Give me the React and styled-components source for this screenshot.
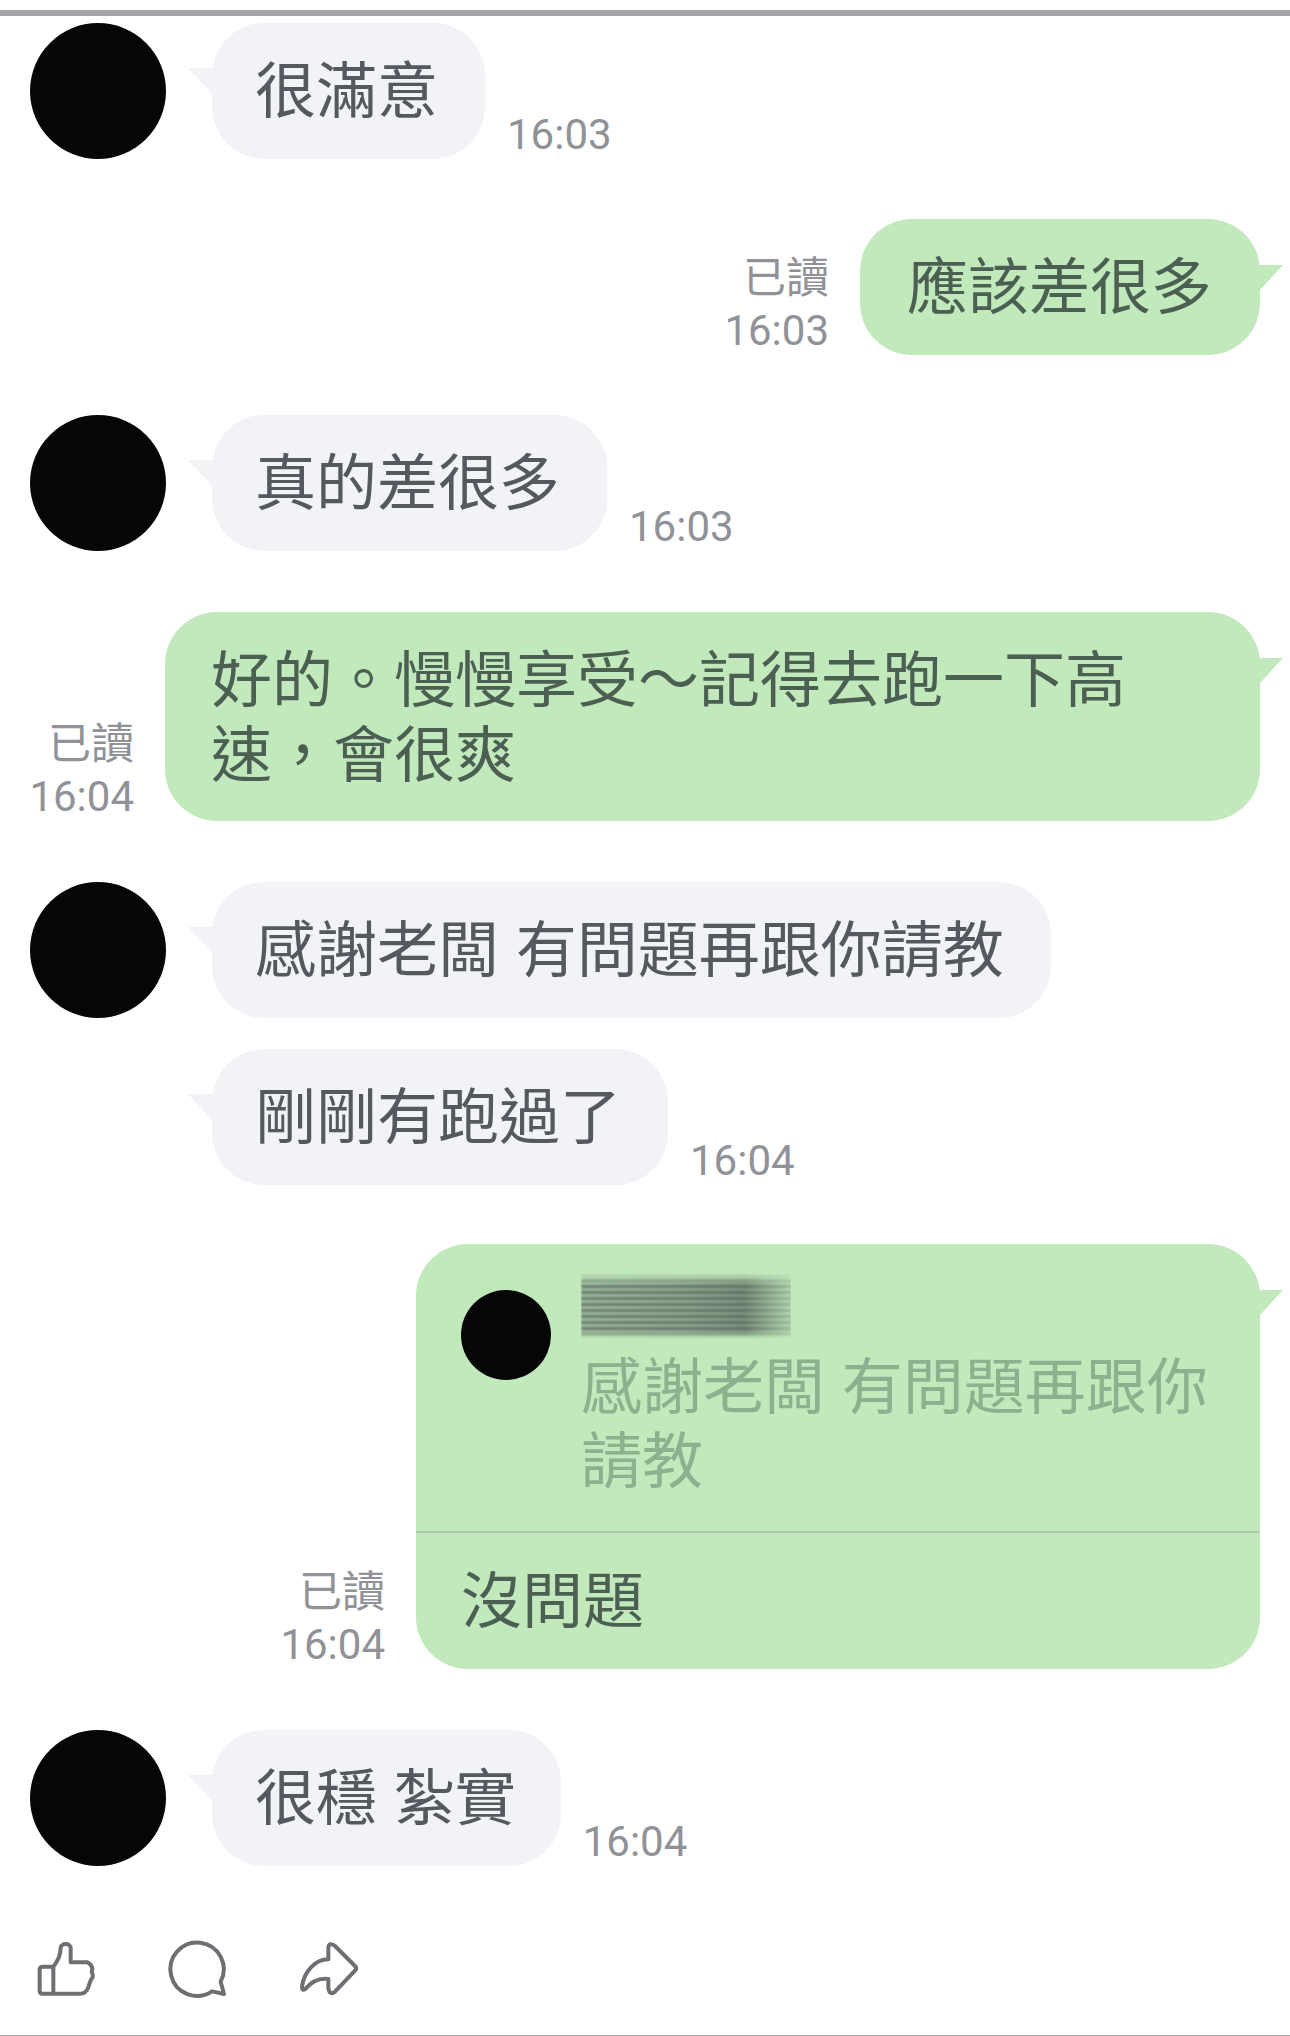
import React from "react";
import styled, { createGlobalStyle } from "styled-components";

const Global = createGlobalStyle`
  html, body { margin: 0; padding: 0; background: #fff; }
  body { font-family: "Noto Sans CJK TC", "Noto Sans", sans-serif; }
`;

const Page = styled.div`
  width: 1290px;
  height: 2036px;
  box-sizing: border-box;
  padding-top: 10px;
  background: #fff;
  border-bottom: 1px solid #a9a9ab;
  overflow: hidden;
`;

const TopBar = styled.div`
  height: 6px;
  background: #a4a5aa;
`;

const Row = styled.div`
  display: flex;
  align-items: flex-start;
  justify-content: ${(p) => (p.$out ? "flex-end" : "flex-start")};
  margin-top: ${(p) => p.$top}px;
  padding: ${(p) => (p.$out ? "0 30px 0 0" : "0 0 0 30px")};
`;

const Avatar = styled.div`
  flex: none;
  width: 136px;
  height: 136px;
  margin-right: 46px;
  border-radius: 50%;
  background: ${(p) => (p.$hidden ? "transparent" : "#060606")};
`;

const bubblePadding = (p) => {
  if (p.$quote) return "0";
  if (p.$width) return "26px 46px 33px";
  if (p.$tight) return "26px 45px 35px 43px";
  return p.$out ? "26px 48px 35px 47px" : "26px 47px 35px 43px";
};

const Bubble = styled.div`
  position: relative;
  flex: none;
  box-sizing: border-box;
  width: ${(p) => (p.$width ? `${p.$width}px` : "auto")};
  padding: ${bubblePadding};
  border-radius: 52px;
  background: ${(p) => (p.$out ? "#c1e9bc" : "#f2f3f6")};
  color: ${(p) => (p.$out ? "#4c5f53" : "#55585f")};
  font-size: 61px;
  line-height: 75px;
  word-spacing: 3px;
  white-space: nowrap;

  &::before {
    content: "";
    position: absolute;
    top: ${(p) => (p.$out ? "46px" : "45px")};
    ${(p) => (p.$out ? "right: -23px;" : "left: -24px;")}
    width: 30px;
    height: 26px;
    background: ${(p) => (p.$out ? "#c1e9bc" : "#f2f3f6")};
    clip-path: ${(p) =>
      p.$out
        ? "polygon(100% 0, 0 0, 20% 100%)"
        : "polygon(0 0, 100% 0, 80% 100%)"};
  }
`;

const Meta = styled.div`
  flex: none;
  align-self: flex-end;
  display: flex;
  flex-direction: column;
  align-items: ${(p) => (p.$out ? "flex-end" : "flex-start")};
  gap: 9px;
  margin: ${(p) => (p.$out ? "0 31px 0 0" : "0 0 0 22px")};
  color: #909297;
  line-height: 48px;
`;

const Read = styled.span`
  font-family: "Noto Sans CJK TC", sans-serif;
  font-size: 43px;
  font-weight: 400;
`;

const Time = styled.span`
  font-family: Roboto, "Liberation Sans", sans-serif;
  font-size: 42px;
  font-weight: 400;
`;

const QuoteTop = styled.div`
  display: flex;
  align-items: flex-start;
  height: 289px;
  box-sizing: border-box;
  padding: 29px 0 0 45px;
  border-bottom: 2px solid #aec9ae;
`;

const QuoteAvatar = styled.div`
  flex: none;
  width: 90px;
  height: 90px;
  margin: 17px 30px 0 0;
  border-radius: 50%;
  background: #060606;
`;

const QuoteBody = styled.div`
  display: flex;
  flex-direction: column;
`;

const BlurName = styled.div`
  width: 210px;
  height: 66px;
  margin-bottom: 7px;
  background:
    linear-gradient(90deg, rgba(84, 100, 88, 0.1) 0, rgba(84, 100, 88, 0.3) 50%, rgba(84, 100, 88, 0.5) 78%, rgba(193, 233, 188, 0.55) 100%),
    repeating-linear-gradient(180deg, #6c8070 0 3px, #a9c6a9 3px 6px);
  filter: blur(1.2px);
  -webkit-mask-image: linear-gradient(180deg, transparent 0, #000 18%, #000 88%, transparent 100%);
  mask-image: linear-gradient(180deg, transparent 0, #000 18%, #000 88%, transparent 100%);
`;

const QuoteText = styled.div`
  color: #8db08f;
  font-size: 61px;
  line-height: 74px;
`;

const Reply = styled.div`
  padding: 26px 45px 35px;
`;

const Footer = styled.div`
  display: flex;
  gap: 73.5px;
  margin-top: 74px;
  padding-left: 37px;
`;

const IconSvg = styled.svg`
  width: 58px;
  height: 58px;
  overflow: visible;
  fill: none;
  stroke: #6e6f73;
  stroke-width: 12;
  stroke-linecap: round;
  stroke-linejoin: round;
`;

const Incoming = ({ top, text, time, hideAvatar, tight }) => (
  <Row $top={top}>
    <Avatar $hidden={hideAvatar} />
    <Bubble $tight={tight}>{text}</Bubble>
    {time && (
      <Meta>
        <Time>{time}</Time>
      </Meta>
    )}
  </Row>
);

const OutMeta = ({ time }) => (
  <Meta $out>
    <Read>已讀</Read>
    <Time>{time}</Time>
  </Meta>
);

export default function App() {
  return (
    <Page>
      <Global />
      <TopBar />
      <Incoming top={7} text="很滿意" time="16:03" />
      <Row $out $top={60}>
        <OutMeta time="16:03" />
        <Bubble $out>應該差很多</Bubble>
      </Row>
      <Incoming top={60} text="真的差很多" time="16:03" />
      <Row $out $top={61}>
        <OutMeta time="16:04" />
        <Bubble $out $width={1095}>
          好的。慢慢享受～記得去跑一下高
          <br />
          速，會很爽
        </Bubble>
      </Row>
      <Incoming top={61} text="感謝老闆 有問題再跟你請教" />
      <Incoming top={31} text="剛剛有跑過了" time="16:04" hideAvatar />
      <Row $out $top={59}>
        <OutMeta time="16:04" />
        <Bubble $out $quote $width={844}>
          <QuoteTop>
            <QuoteAvatar />
            <QuoteBody>
              <BlurName />
              <QuoteText>
                感謝老闆 有問題再跟你
                <br />
                請教
              </QuoteText>
            </QuoteBody>
          </QuoteTop>
          <Reply>沒問題</Reply>
        </Bubble>
      </Row>
      <Incoming top={61} text="很穩 紮實" time="16:04" tight />
      <Footer>
        <IconSvg viewBox="111 120 174 174">
          <path d="M160 200H128Q119 200 119 209V272Q119 281 128 281H240Q258 281 265 262C268 250 272 245 272 240C278 235 280 225 275 215C279 208 278 195 262 187H212V145C212 128 182 128 182 145C182 170 172 185 160 200V281" />
        </IconSvg>
        <IconSvg viewBox="505 120 174 174">
          <path d="M660 245L670 282L634 274A80 80 0 1 1 660 245Z" />
        </IconSvg>
        <IconSvg viewBox="900 120 174 174">
          <path d="M985 178V145Q985 125 1005 138L1065 198Q1072 205 1065 212L1005 275Q990 288 985 265V237C950 232 930 250 915 268Q905 273 906 260C912 215 945 178 985 178Z" />
        </IconSvg>
      </Footer>
    </Page>
  );
}
